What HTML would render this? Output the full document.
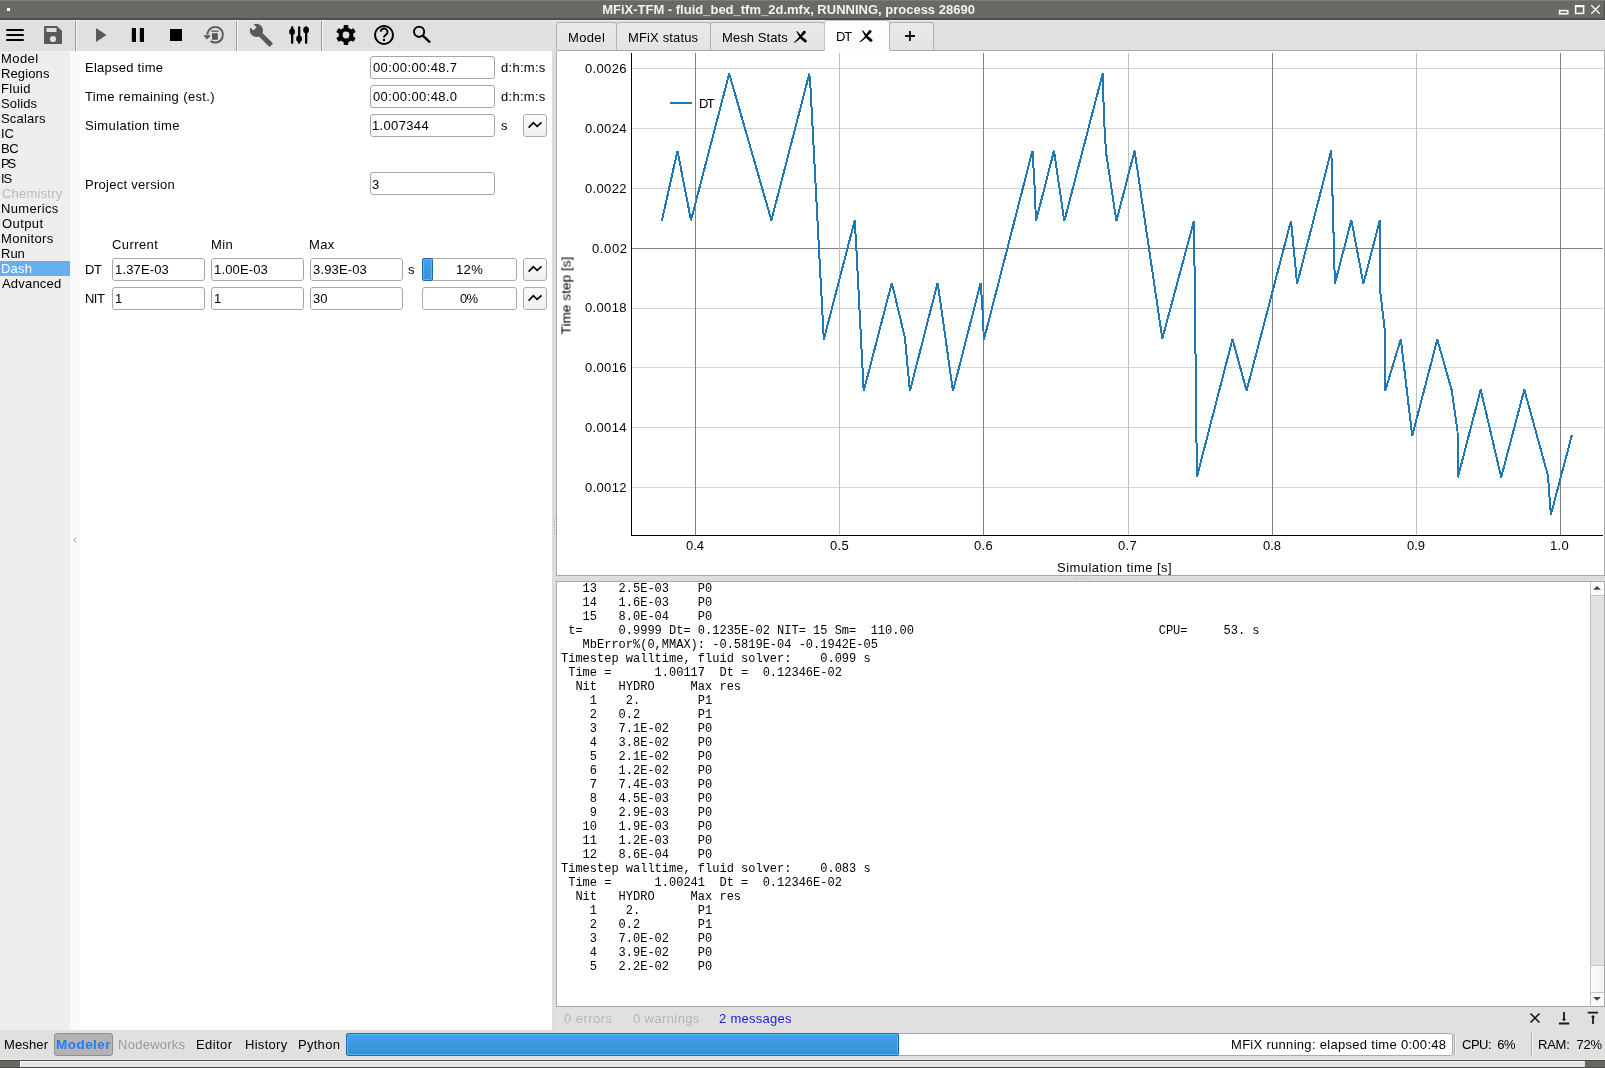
<!DOCTYPE html>
<html><head><meta charset="utf-8"><style>
*{margin:0;padding:0;box-sizing:border-box}
html,body{-webkit-font-smoothing:antialiased;width:1605px;height:1068px;overflow:hidden;background:#e0e0e0;font-family:"Liberation Sans",sans-serif;font-size:13px;color:#000}
.a{position:absolute}
.t{position:absolute;white-space:pre;line-height:15px;font-size:13px;will-change:transform}
.inp{position:absolute;height:23px;border:1px solid #a6a6a6;border-radius:3px;background:#fff}
.btn{position:absolute;width:24px;height:23px;border:1px solid #acacac;border-radius:3px;background:linear-gradient(#fbfbfb,#efefef)}
.mono{position:absolute;font-family:"Liberation Mono",monospace;font-size:12px;line-height:14px;white-space:pre;will-change:transform}
.tab{position:absolute;top:22px;height:28px;border:1px solid #b2b2b2;border-bottom:none;border-radius:3px 3px 0 0;background:linear-gradient(#eaeaea,#e3e3e3)}
svg{position:absolute;overflow:visible}
</style></head><body>
<div class="a" style="left:0px;top:0px;width:1605px;height:20px;background:#696a65;border-top:1px solid #7b7c77;border-bottom:2px solid #4c4d49"></div>
<div class="a" style="left:7px;top:8px;width:3px;height:3px;background:#fff"></div>
<div class="t" style="left:-14.5px;top:2px;width:1605px;text-align:center;font-weight:bold;color:#f2f2f2;font-size:13px;line-height:15px">MFiX-TFM - fluid_bed_tfm_2d.mfx, RUNNING, process 28690</div>
<svg style="left:0;top:0" width="1605" height="20">
<rect x="1559.6" y="10.6" width="8.2" height="3.2" fill="none" stroke="#fff" stroke-width="1.5"/>
<rect x="1575.6" y="5.8" width="8" height="7.6" fill="none" stroke="#fff" stroke-width="1.5"/>
<rect x="1575" y="5" width="9.2" height="2.2" fill="#fff"/>
<path d="M1591.3 5.3 L1599.7 13.7 M1599.7 5.3 L1591.3 13.7" stroke="#fff" stroke-width="1.3"/>
<rect x="1604" y="1" width="1" height="18" fill="#4c4d49"/>
</svg>
<div class="a" style="left:0px;top:20px;width:1605px;height:31px;background:#e0e0e0;border-top:1px solid #ebebeb"></div>
<div class="a" style="left:75px;top:21px;width:1px;height:30px;background:#9c9c9c"></div>
<div class="a" style="left:76px;top:21px;width:1px;height:30px;background:#f8f8f8"></div>
<div class="a" style="left:236px;top:21px;width:1px;height:30px;background:#9c9c9c"></div>
<div class="a" style="left:237px;top:21px;width:1px;height:30px;background:#f8f8f8"></div>
<div class="a" style="left:321px;top:21px;width:1px;height:30px;background:#9c9c9c"></div>
<div class="a" style="left:322px;top:21px;width:1px;height:30px;background:#f8f8f8"></div>
<svg style="left:0;top:0" width="560" height="52">
<g fill="#000">
<rect x="6" y="29" width="18" height="2" rx="1"/><rect x="6" y="34" width="18" height="2" rx="1"/><rect x="6" y="39" width="18" height="2" rx="1"/>
</g>
<path d="M45 26 h12 l5 5 v12 a1 1 0 0 1 -1 1 h-16 a1 1 0 0 1 -1 -1 v-16 a1 1 0 0 1 1 -1z" fill="#595959"/>
<rect x="46.5" y="28" width="10" height="4" fill="#e0e0e0"/>
<circle cx="53" cy="39" r="3.1" fill="#e0e0e0"/>
<path d="M96 28 L106.5 35 L96 42 Z" fill="#595959"/>
<rect x="131.8" y="28" width="4.2" height="14" fill="#000"/><rect x="139.8" y="28" width="4.2" height="14" fill="#000"/>
<rect x="170" y="29" width="12" height="12" fill="#000"/>
<path d="M207.4 34.7 A7.8 7.8 0 1 1 210.7 41.1" fill="none" stroke="#595959" stroke-width="1.9"/>
<path d="M203.2 35.3 L211 35.3 L207 39.6 Z" fill="#595959"/>
<rect x="212" y="33.2" width="5.8" height="6.6" fill="#595959"/>
<rect x="211.2" y="30.5" width="7.4" height="1.3" fill="#595959"/>
<g transform="translate(256.4,30.4) rotate(45)">
<circle cx="0" cy="0" r="6.6" fill="#595959"/>
<rect x="0" y="-2.5" width="21" height="5" fill="#595959"/>
<rect x="-8" y="-2.3" width="6" height="4.6" fill="#e0e0e0"/>
</g>
<g fill="#000">
<rect x="291" y="26.2" width="2.3" height="17.6" rx="1"/><ellipse cx="292.1" cy="31.8" rx="2.9" ry="3.2"/>
<rect x="298" y="26.2" width="2.3" height="17.6" rx="1"/><ellipse cx="299.1" cy="38.8" rx="2.9" ry="3.2"/>
<rect x="305" y="26.2" width="2.3" height="17.6" rx="1"/><ellipse cx="306.1" cy="29.9" rx="2.9" ry="3.2"/>
</g>
<g transform="translate(346,35)" fill="#000">
<circle r="7.4"/>
<rect x="-2.3" y="-9.9" width="4.6" height="19.8" rx="0.8"/>
<rect x="-2.3" y="-9.9" width="4.6" height="19.8" rx="0.8" transform="rotate(60)"/>
<rect x="-2.3" y="-9.9" width="4.6" height="19.8" rx="0.8" transform="rotate(120)"/>
<circle r="3.4" fill="#e0e0e0"/>
</g>
<circle cx="384" cy="35" r="9" fill="none" stroke="#000" stroke-width="2"/>
<path d="M380.7 31.8 a3.4 3.4 0 1 1 5.4 2.8 c-1.3 0.9 -2.1 1.3 -2.1 2.9" fill="none" stroke="#000" stroke-width="1.9"/>
<circle cx="384" cy="40" r="1.2" fill="#000"/>
<circle cx="419.1" cy="31.8" r="5.1" fill="none" stroke="#000" stroke-width="2"/>
<path d="M422.8 35.6 L430 42.4" stroke="#000" stroke-width="2.3"/>
</svg>
<div class="a" style="left:557px;top:50px;width:1048px;height:1px;background:#a9a9a9"></div>
<div class="tab" style="left:556px;width:61px"></div>
<div class="t" style="left:567.70px;top:30.0px;font-size:13px;letter-spacing:0.350px;">Model</div>
<div class="tab" style="left:616px;width:95px"></div>
<div class="t" style="left:627.65px;top:30.0px;font-size:13px;letter-spacing:0.140px;">MFiX status</div>
<div class="tab" style="left:710px;width:115px"></div>
<div class="t" style="left:721.70px;top:30.0px;font-size:13px;letter-spacing:0.077px;">Mesh Stats</div>
<div class="tab" style="left:824px;width:66px;top:20px;height:31px;background:#fdfdfd;border-color:#c4c4c4"></div>
<div class="t" style="left:836.10px;top:29.0px;font-size:13px;letter-spacing:-1.050px;">DT</div>
<div class="tab" style="left:889px;width:45px"></div>
<svg style="left:0;top:0" width="1000" height="52">
<g id="xic"><path d="M803.4 30.9 Q805 30.2 805.9 31.7 Q806 32.6 805.2 33.4 L799.6 38.9 Q797 41.6 794 42.9 Q793.6 42.7 793.9 42.2 Q796.8 39.8 798.6 37.6 Z" fill="#000"/>
<path d="M796.4 31.1 Q797 30.9 797.6 31.4 L801.6 36.2 L806.6 40.3 Q807.2 41.8 806 42.4 Q805 42.7 804.2 42.1 L800.2 38.4 L796.5 31.8 Z" fill="#000"/></g>
<use href="#xic" transform="translate(65.7,-0.7)"/>
<path d="M905 36 h10 M910 31 v10" stroke="#111" stroke-width="1.8"/>
</svg>
<div class="a" style="left:0px;top:51px;width:70px;height:979px;background:#eeeeee"></div>
<div class="a" style="left:70px;top:51px;width:10px;height:979px;background:#fafafa"></div>
<div class="a" style="left:80px;top:51px;width:472px;height:979px;background:#ffffff"></div>
<div class="a" style="left:552px;top:51px;width:5px;height:979px;background:#dddddd"></div>
<div class="a" style="left:0px;top:261px;width:70px;height:15px;background:#63aff2"></div>
<div class="t" style="left:1.45px;top:51.0px;font-size:13px;letter-spacing:0.440px;color:#000">Model</div>
<div class="t" style="left:1.45px;top:66.0px;font-size:13px;letter-spacing:0.117px;color:#000">Regions</div>
<div class="t" style="left:1.45px;top:81.0px;font-size:13px;letter-spacing:0.350px;color:#000">Fluid</div>
<div class="t" style="left:1.45px;top:96.0px;font-size:13px;letter-spacing:0.140px;color:#000">Solids</div>
<div class="t" style="left:1.45px;top:111.0px;font-size:13px;letter-spacing:0.174px;color:#000">Scalars</div>
<div class="t" style="left:1.45px;top:126.0px;font-size:13px;color:#000">IC</div>
<div class="t" style="left:1.45px;top:141.0px;font-size:13px;letter-spacing:-0.350px;color:#000">BC</div>
<div class="t" style="left:1.45px;top:156.0px;font-size:13px;letter-spacing:-2.100px;color:#000">PS</div>
<div class="t" style="left:1.45px;top:171.0px;font-size:13px;letter-spacing:-1.050px;color:#000">IS</div>
<div class="t" style="left:2.15px;top:186.0px;font-size:13px;letter-spacing:0.218px;color:#b9b9b9">Chemistry</div>
<div class="t" style="left:1.45px;top:201.0px;font-size:13px;letter-spacing:0.350px;color:#000">Numerics</div>
<div class="t" style="left:2.15px;top:216.0px;font-size:13px;letter-spacing:0.420px;color:#000">Output</div>
<div class="t" style="left:1.45px;top:231.0px;font-size:13px;letter-spacing:0.350px;color:#000">Monitors</div>
<div class="t" style="left:1.45px;top:246.0px;font-size:13px;color:#000">Run</div>
<div class="t" style="left:1.45px;top:261.0px;font-size:13px;letter-spacing:0.234px;color:#fff">Dash</div>
<div class="t" style="left:2.15px;top:276.0px;font-size:13px;letter-spacing:0.200px;color:#000">Advanced</div>
<svg style="left:0;top:0" width="100" height="600"><path d="M76 537.5 L74 540 L76 542.5" fill="none" stroke="#9a9a9a" stroke-width="1"/></svg>
<svg style="left:0;top:0" width="600" height="600"><rect x="554" y="518" width="1" height="1" fill="#aaa"/><rect x="554" y="521" width="1" height="1" fill="#aaa"/><rect x="554" y="524" width="1" height="1" fill="#aaa"/><rect x="554" y="527" width="1" height="1" fill="#aaa"/><rect x="554" y="530" width="1" height="1" fill="#aaa"/><rect x="554" y="533" width="1" height="1" fill="#aaa"/></svg>
<div class="t" style="left:84.90px;top:60.0px;font-size:13px;letter-spacing:0.254px;">Elapsed time</div>
<div class="t" style="left:84.75px;top:89.0px;font-size:13px;letter-spacing:0.365px;">Time remaining (est.)</div>
<div class="t" style="left:84.90px;top:118.0px;font-size:13px;letter-spacing:0.400px;">Simulation time</div>
<div class="inp" style="left:370px;top:56px;width:125px"></div>
<div class="t" style="left:373.15px;top:60.0px;font-size:13px;letter-spacing:0.379px;">00:00:00:48.7</div>
<div class="t" style="left:501.40px;top:60.0px;font-size:13px;letter-spacing:0.291px;">d:h:m:s</div>
<div class="inp" style="left:370px;top:85px;width:125px"></div>
<div class="t" style="left:373.15px;top:89.0px;font-size:13px;letter-spacing:0.379px;">00:00:00:48.0</div>
<div class="t" style="left:501.40px;top:89.0px;font-size:13px;letter-spacing:0.291px;">d:h:m:s</div>
<div class="inp" style="left:370px;top:114px;width:125px"></div>
<div class="t" style="left:372.45px;top:118.0px;font-size:13px;letter-spacing:0.350px;">1.007344</div>
<div class="t" style="left:500.70px;top:118.0px;font-size:13px;">s</div>
<div class="btn" style="left:523px;top:114px"></div>
<div class="t" style="left:84.50px;top:177.0px;font-size:13px;letter-spacing:0.275px;">Project version</div>
<div class="inp" style="left:370px;top:172px;width:125px"></div>
<div class="t" style="left:372.30px;top:177.0px;font-size:13px;">3</div>
<div class="t" style="left:111.90px;top:237.0px;font-size:13px;letter-spacing:0.409px;">Current</div>
<div class="t" style="left:210.90px;top:237.0px;font-size:13px;letter-spacing:0.350px;">Min</div>
<div class="t" style="left:309.30px;top:237.0px;font-size:13px;letter-spacing:0.350px;">Max</div>
<div class="t" style="left:84.50px;top:262.0px;font-size:13px;letter-spacing:-0.350px;">DT</div>
<div class="t" style="left:84.50px;top:291.0px;font-size:13px;letter-spacing:-0.525px;">NIT</div>
<div class="inp" style="left:112px;top:258px;width:93px"></div>
<div class="t" style="left:114.85px;top:262.0px;font-size:13px;letter-spacing:0.150px;">1.37E-03</div>
<div class="inp" style="left:211px;top:258px;width:93px"></div>
<div class="t" style="left:213.85px;top:262.0px;font-size:13px;letter-spacing:0.150px;">1.00E-03</div>
<div class="inp" style="left:310px;top:258px;width:93px"></div>
<div class="t" style="left:312.85px;top:262.0px;font-size:13px;letter-spacing:0.150px;">3.93E-03</div>
<div class="inp" style="left:422px;top:258px;width:95px;border-color:#ababab"></div>
<div class="btn" style="left:523px;top:258px"></div>
<div class="inp" style="left:112px;top:287px;width:93px"></div>
<div class="t" style="left:114.85px;top:291.0px;font-size:13px;">1</div>
<div class="inp" style="left:211px;top:287px;width:93px"></div>
<div class="t" style="left:213.85px;top:291.0px;font-size:13px;">1</div>
<div class="inp" style="left:310px;top:287px;width:93px"></div>
<div class="t" style="left:312.85px;top:291.0px;font-size:13px;">30</div>
<div class="inp" style="left:422px;top:287px;width:95px;border-color:#ababab"></div>
<div class="btn" style="left:523px;top:287px"></div>
<div class="t" style="left:407.85px;top:262.0px;font-size:13px;">s</div>
<div class="a" style="left:422px;top:258px;width:11px;height:23px;background:linear-gradient(#3fa3ea,#3592da);border:1px solid #1e68a6;border-radius:2px;box-shadow:inset 0 0 0 1px #5ab5f2"></div>
<div class="t" style="left:456.10px;top:262.0px;font-size:13px;letter-spacing:0.350px;">12%</div>
<div class="t" style="left:460.40px;top:291.0px;font-size:13px;letter-spacing:-0.700px;">0%</div>
<svg style="left:0;top:0" width="560" height="320"><path d="M528.6 127.6 L533.4 122.7 L537.1 126.3 L541.6 122.3" fill="none" stroke="#000" stroke-width="1.6"/><path d="M528.6 271.6 L533.4 266.7 L537.1 270.3 L541.6 266.3" fill="none" stroke="#000" stroke-width="1.6"/><path d="M528.6 300.6 L533.4 295.7 L537.1 299.3 L541.6 295.3" fill="none" stroke="#000" stroke-width="1.6"/></svg>
<div class="a" style="left:556px;top:51px;width:1049px;height:525px;background:#fff;border:1px solid #a9a9a9;border-top:none"></div>
<div class="a" style="left:556px;top:576px;width:1049px;height:5px;background:#dddddd"></div>
<svg style="left:0;top:0" width="1605" height="600"><rect x="1074" y="578" width="1" height="1" fill="#aaa"/><rect x="1077" y="578" width="1" height="1" fill="#aaa"/><rect x="1080" y="578" width="1" height="1" fill="#aaa"/><rect x="1083" y="578" width="1" height="1" fill="#aaa"/><rect x="1086" y="578" width="1" height="1" fill="#aaa"/><rect x="1089" y="578" width="1" height="1" fill="#aaa"/></svg>
<svg style="left:0;top:0" width="1605" height="600"><line x1="632" y1="68.5" x2="1603" y2="68.5" stroke="#d4d4d4" stroke-width="1" shape-rendering="crispEdges"/><line x1="632" y1="128.5" x2="1603" y2="128.5" stroke="#d4d4d4" stroke-width="1" shape-rendering="crispEdges"/><line x1="632" y1="188.5" x2="1603" y2="188.5" stroke="#d4d4d4" stroke-width="1" shape-rendering="crispEdges"/><line x1="632" y1="308.5" x2="1603" y2="308.5" stroke="#d4d4d4" stroke-width="1" shape-rendering="crispEdges"/><line x1="632" y1="367.5" x2="1603" y2="367.5" stroke="#d4d4d4" stroke-width="1" shape-rendering="crispEdges"/><line x1="632" y1="427.5" x2="1603" y2="427.5" stroke="#d4d4d4" stroke-width="1" shape-rendering="crispEdges"/><line x1="632" y1="487.5" x2="1603" y2="487.5" stroke="#d4d4d4" stroke-width="1" shape-rendering="crispEdges"/><line x1="632" y1="248.5" x2="1603" y2="248.5" stroke="#808080" stroke-width="1" shape-rendering="crispEdges"/><line x1="839.5" y1="53" x2="839.5" y2="535" stroke="#c0c0c0" stroke-width="1" shape-rendering="crispEdges"/><line x1="1128.5" y1="53" x2="1128.5" y2="535" stroke="#c0c0c0" stroke-width="1" shape-rendering="crispEdges"/><line x1="1416.5" y1="53" x2="1416.5" y2="535" stroke="#c0c0c0" stroke-width="1" shape-rendering="crispEdges"/><line x1="695.5" y1="53" x2="695.5" y2="535" stroke="#808080" stroke-width="1" shape-rendering="crispEdges"/><line x1="983.5" y1="53" x2="983.5" y2="535" stroke="#808080" stroke-width="1" shape-rendering="crispEdges"/><line x1="1272.5" y1="53" x2="1272.5" y2="535" stroke="#808080" stroke-width="1" shape-rendering="crispEdges"/><line x1="1560.5" y1="53" x2="1560.5" y2="535" stroke="#808080" stroke-width="1" shape-rendering="crispEdges"/><line x1="631.5" y1="53" x2="631.5" y2="536" stroke="#000" stroke-width="1" shape-rendering="crispEdges"/><line x1="631" y1="535.5" x2="1603" y2="535.5" stroke="#000" stroke-width="1" shape-rendering="crispEdges"/><polyline fill="none" stroke="#1f77b4" stroke-width="2" stroke-linejoin="miter" stroke-miterlimit="3" shape-rendering="crispEdges" points="661.8,221 677.5,150.8 691,220.3 729.2,73.7 771.4,220.3 809.3,73.7 810.5,88 823.8,339.6 854.7,220.4 856.2,245 863.7,391.1 891.8,282.79999999999995 904.9,337.6 909.9,391.1 937.6,282.79999999999995 953,391.1 980.7,282.79999999999995 982.5,310 983.9,339.6 1032.5,150.70000000000002 1034.5,185 1036,221.1 1054,150.70000000000002 1064.3,221.1 1102.7,73.5 1103.6,105 1104.7,131 1106,152 1116.4,221.1 1134.6,150.70000000000002 1162.3,338.6 1194,220.8 1196.9,476.8 1232.5,339.29999999999995 1246.6,390.6 1291,220.8 1297.1,283.9 1331.3,150.5 1334.9,283.7 1351.4,220.20000000000002 1363.4,283.7 1379.8,220.20000000000002 1380.3,291.7 1385.2,333.6 1385.2,390.9 1400.8,339.09999999999997 1412.2,435.8 1437.3,339.5 1451.6,389.8 1457.5,431.1 1457.9,477.3 1480.7,389.7 1501.2,477.3 1524.3,389.7 1547.9,475.3 1550.9,514.6 1571.9,435"/><line x1="670" y1="103" x2="692" y2="103" stroke="#1f77b4" stroke-width="2"/></svg>
<div class="t" style="left:699.45px;top:96.0px;font-size:13px;letter-spacing:-1.750px;">DT</div>
<div class="t" style="left:584.90px;top:60.8px;font-size:13px;letter-spacing:0.350px;">0.0026</div>
<div class="t" style="left:584.90px;top:120.7px;font-size:13px;letter-spacing:0.350px;">0.0024</div>
<div class="t" style="left:584.90px;top:180.6px;font-size:13px;letter-spacing:0.350px;">0.0022</div>
<div class="t" style="left:592.15px;top:240.5px;font-size:13px;letter-spacing:0.610px;">0.002</div>
<div class="t" style="left:584.90px;top:300.3px;font-size:13px;letter-spacing:0.350px;">0.0018</div>
<div class="t" style="left:584.90px;top:360.2px;font-size:13px;letter-spacing:0.350px;">0.0016</div>
<div class="t" style="left:584.90px;top:420.1px;font-size:13px;letter-spacing:0.350px;">0.0014</div>
<div class="t" style="left:584.90px;top:480.0px;font-size:13px;letter-spacing:0.350px;">0.0012</div>
<div class="t" style="left:685.75px;top:538.0px;font-size:13px;">0.4</div>
<div class="t" style="left:829.80px;top:538.0px;font-size:13px;letter-spacing:0.350px;">0.5</div>
<div class="t" style="left:973.85px;top:538.0px;font-size:13px;letter-spacing:0.350px;">0.6</div>
<div class="t" style="left:1117.90px;top:538.0px;font-size:13px;letter-spacing:0.350px;">0.7</div>
<div class="t" style="left:1262.65px;top:538.0px;font-size:13px;">0.8</div>
<div class="t" style="left:1406.70px;top:538.0px;font-size:13px;">0.9</div>
<div class="t" style="left:1550.05px;top:538.0px;font-size:13px;letter-spacing:0.350px;">1.0</div>
<div class="t" style="left:1057.30px;top:560.0px;font-size:13px;letter-spacing:0.468px;">Simulation time [s]</div>
<div class="t" style="left:566px;top:296px;width:0;height:0"><div style="position:absolute;left:-60px;top:-8px;width:120px;text-align:center;transform:rotate(-90deg);font-size:13.7px;line-height:15px">Time step [s]</div></div>
<div class="a" style="left:556px;top:581px;width:1049px;height:426px;background:#fff;border:1px solid #a9a9a9"></div>
<div class="mono" style="left:561px;top:582px">   13   2.5E-03    P0
   14   1.6E-03    P0
   15   8.0E-04    P0
 t=     0.9999 Dt= 0.1235E-02 NIT= 15 Sm=  110.00                                  CPU=     53. s
   MbError%(0,MMAX): -0.5819E-04 -0.1942E-05
Timestep walltime, fluid solver:    0.099 s
 Time =      1.00117  Dt =  0.12346E-02
  Nit   HYDRO     Max res
    1    2.        P1
    2   0.2        P1
    3   7.1E-02    P0
    4   3.8E-02    P0
    5   2.1E-02    P0
    6   1.2E-02    P0
    7   7.4E-03    P0
    8   4.5E-03    P0
    9   2.9E-03    P0
   10   1.9E-03    P0
   11   1.2E-03    P0
   12   8.6E-04    P0
Timestep walltime, fluid solver:    0.083 s
 Time =      1.00241  Dt =  0.12346E-02
  Nit   HYDRO     Max res
    1    2.        P1
    2   0.2        P1
    3   7.0E-02    P0
    4   3.9E-02    P0
    5   2.2E-02    P0</div>
<div class="a" style="left:1590px;top:582px;width:14px;height:424px;background:#e1e1e1;border-left:1px solid #c0c0c0"></div>
<div class="a" style="left:1590px;top:582px;width:14px;height:14px;background:#fafafa;border-left:1px solid #c0c0c0;border-bottom:1px solid #c6c6c6"></div>
<div class="a" style="left:1590px;top:965px;width:14px;height:28px;background:linear-gradient(90deg,#fafafa,#f4f4f4);border-left:1px solid #c0c0c0;border-top:1px solid #c6c6c6;border-bottom:1px solid #c6c6c6"></div>
<div class="a" style="left:1590px;top:992px;width:14px;height:14px;background:#fafafa;border-left:1px solid #c0c0c0;border-top:1px solid #c6c6c6"></div>
<svg style="left:0;top:0" width="1605" height="1068"><path d="M1593.2 589.8 L1597 586 L1600.8 589.8Z" fill="#444"/><path d="M1593.2 997 L1597 1000.8 L1600.8 997Z" fill="#444"/></svg>
<div class="t" style="left:563.90px;top:1011.0px;font-size:13px;letter-spacing:0.450px;color:#b4b4b4">0 errors</div>
<div class="t" style="left:632.90px;top:1011.0px;font-size:13px;letter-spacing:0.389px;color:#b4b4b4">0 warnings</div>
<div class="t" style="left:719.30px;top:1011.0px;font-size:13px;letter-spacing:0.273px;color:#1b1be0">2 messages</div>
<svg style="left:0;top:0" width="1605" height="1068">
<path d="M1530.5 1013.5 L1539.5 1022.5 M1539.5 1013.5 L1530.5 1022.5" stroke="#111" stroke-width="1.5"/>
<path d="M1564 1012 V1019.5 M1559 1023.5 H1569.2 M1598.1 1012.6 H1587.7 M1593 1017 V1024" stroke="#1a1a1a" stroke-width="1.8" fill="none"/>
<path d="M1561.8 1019 L1566.2 1019 L1564 1021.3 Z M1590.8 1017.3 L1595.2 1017.3 L1593 1015 Z" fill="#1a1a1a"/>
</svg>
<div class="t" style="left:4.30px;top:1037.0px;font-size:13px;letter-spacing:0.140px;">Mesher</div>
<div class="a" style="left:54px;top:1033px;width:59px;height:23px;background:#b3b3b3;border:1px solid #8f8f8f;border-radius:3px"></div>
<div class="t" style="left:55.65px;top:1036.5px;font-size:13.5px;letter-spacing:0.466px;font-weight:bold;color:#1f7ff0">Modeler</div>
<div class="t" style="left:118.30px;top:1037.0px;font-size:13px;letter-spacing:0.262px;color:#9a9a9a">Nodeworks</div>
<div class="t" style="left:196.45px;top:1037.0px;font-size:13px;letter-spacing:0.420px;">Editor</div>
<div class="t" style="left:244.50px;top:1037.0px;font-size:13px;letter-spacing:0.292px;">History</div>
<div class="t" style="left:297.85px;top:1037.0px;font-size:13px;letter-spacing:0.280px;">Python</div>
<div class="a" style="left:346px;top:1033px;width:1107px;height:23px;background:#fff;border:1px solid #a9a9a9;border-radius:3px"></div>
<div class="a" style="left:346px;top:1033px;width:553px;height:23px;background:linear-gradient(#40a4ea,#3390d8);border:1px solid #1e68a6;border-radius:2px;box-shadow:inset 0 0 0 1px #58b4f2"></div>
<div class="t" style="left:1230.50px;top:1037.0px;font-size:13px;letter-spacing:0.298px;">MFiX running: elapsed time 0:00:48</div>
<div class="a" style="left:1454px;top:1033px;width:1px;height:23px;background:#b0b0b0"></div>
<div class="a" style="left:1455px;top:1033px;width:1px;height:23px;background:#f4f4f4"></div>
<div class="a" style="left:1531px;top:1033px;width:1px;height:23px;background:#b0b0b0"></div>
<div class="a" style="left:1532px;top:1033px;width:1px;height:23px;background:#f4f4f4"></div>
<div class="t" style="left:1461.70px;top:1037.0px;font-size:13px;letter-spacing:-0.500px;">CPU:  6%</div>
<div class="t" style="left:1538.45px;top:1037.0px;font-size:13px;letter-spacing:-0.219px;">RAM:  72%</div>
<div class="a" style="left:0px;top:1059px;width:1605px;height:1px;background:#ebebeb"></div>
<div class="a" style="left:0px;top:1060px;width:1605px;height:8px;background:#4a4b47"></div>
<div class="a" style="left:0px;top:1061px;width:20px;height:6px;background:#676863"></div>
<div class="a" style="left:20px;top:1061px;width:1565px;height:6px;background:#e6e6e6;border-top:1px solid #fafafa;border-left:1px solid #fafafa;border-right:1px solid #d8d8d8"></div>
<div class="a" style="left:1585px;top:1061px;width:20px;height:6px;background:#676863"></div>
</body></html>
